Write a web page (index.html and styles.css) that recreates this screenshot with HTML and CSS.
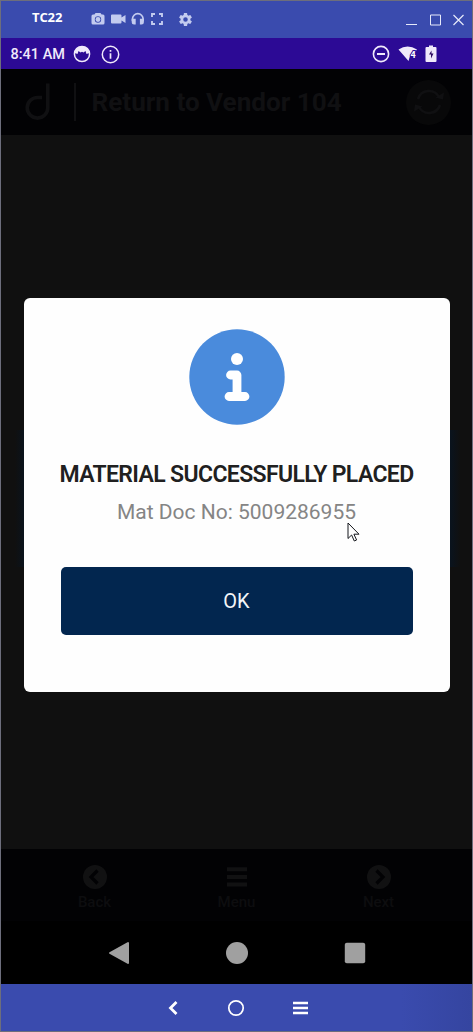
FILE: index.html
```html
<!DOCTYPE html>
<html lang="en">
<head>
<meta charset="utf-8">
<title>TC22</title>
<link rel="stylesheet" href="styles.css">
</head>
<body>
<div class="window">
  <header class="titlebar">
    <span class="device">TC22</span>
    <div class="tools">
      <svg width="14" height="12" viewBox="0 0 14 12"><path fill="currentColor" fill-rule="evenodd" d="M4.5 0h5l1.1 1.5H12a1.5 1.5 0 0 1 1.5 1.5v7a1.5 1.5 0 0 1-1.5 1.5H2A1.5 1.5 0 0 1 .5 10V3A1.5 1.5 0 0 1 2 1.500h1.400zM7 3.300a3.200 3.200 0 1 0 0 6.400a3.200 3.200 0 0 0 0-6.400z"/><circle cx="7" cy="6.500" r="2.400" fill="currentColor"/></svg>
      <svg width="15" height="12" viewBox="0 0 15 12"><path fill="currentColor" d="M1 1.500h8.500a1 1 0 0 1 1 1v2L14.500 2v8l-4-2.500v2a1 1 0 0 1-1 1H1a1 1 0 0 1-1-1v-7a1 1 0 0 1 1-1z"/></svg>
      <svg width="14" height="12" viewBox="0 0 14 12"><path d="M1.500 8V6a5.300 5.300 0 0 1 10.600 0v2" fill="none" stroke="currentColor" stroke-width="1.700"/><path fill="currentColor" d="M.7 5.800h4v5.700H3A2.300 2.300 0 0 1 .7 9.200zM8.900 5.800h4v3.400a2.300 2.300 0 0 1-2.300 2.300H8.900z"/></svg>
      <svg width="12" height="12" viewBox="0 0 12 12"><path d="M1 4V1h3M8 1h3v3M11 8v3H8M4 11H1V8" fill="none" stroke="currentColor" stroke-width="1.900"/></svg>
      <svg class="gear" width="13" height="13" viewBox="2 2 20 20"><path fill="currentColor" d="M19.430 12.980c.04-.32.07-.64.07-.98s-.03-.66-.07-.98l2.110-1.650c.19-.15.24-.42.120-.64l-2-3.460c-.12-.22-.39-.3-.61-.22l-2.490 1c-.52-.4-1.080-.73-1.690-.98l-.38-2.650A.488.488 0 0 0 14 2h-4c-.25 0-.46.18-.49.42l-.38 2.650c-.61.25-1.170.59-1.690.98l-2.490-1c-.23-.09-.49 0-.61.22l-2 3.460c-.13.22-.07.49.12.64l2.110 1.650c-.04.32-.07.65-.07.98s.03.66.07.98l-2.110 1.650c-.19.15-.24.42-.12.64l2 3.460c.12.22.39.3.61.22l2.490-1c.52.4 1.080.73 1.690.98l.38 2.650c.03.24.24.42.49.42h4c.25 0 .46-.18.49-.42l.38-2.650c.61-.25 1.170-.59 1.690-.98l2.490 1c.23.09.49 0 .61-.22l2-3.460c.12-.22.07-.49-.12-.64zM12 15.500a3.500 3.500 0 1 1 0-7a3.500 3.500 0 0 1 0 7z"/></svg>
    </div>
    <div class="controls">
      <svg width="11" height="12" viewBox="0 0 11 12"><path d="M0 10.500h11" stroke="currentColor"/></svg>
      <svg width="11" height="12" viewBox="0 0 11 12"><path d="M.5 1h10v10H.5z" fill="none" stroke="currentColor"/></svg>
      <svg width="11" height="12" viewBox="0 0 11 12"><path d="M.5 1l10 10M10.500 1l-10 10" stroke="currentColor" stroke-width="1.200"/></svg>
    </div>
  </header>

  <div class="statusbar">
    <span class="clock">8:41 AM</span>
    <svg class="face" width="18" height="18" viewBox="0 0 18 18"><circle cx="9" cy="9" r="7.600" fill="none" stroke="currentColor" stroke-width="1.500"/><path fill="currentColor" d="M1.800 8C2.500 3.500 5.500 1.500 9 1.500s6.500 2 7.200 6.500l-2.700 1-1-3-2 1.500L9 6.700 7.500 7.500 5.500 6l-1 3z"/></svg>
    <svg class="info" width="19" height="19" viewBox="0 0 19 19"><circle cx="9.500" cy="9.500" r="8.200" fill="none" stroke="currentColor" stroke-width="1.500"/><path d="M9.500 5v1.800M9.500 8.200v5.600" stroke="currentColor" stroke-width="1.700"/></svg>
    <div class="status-right">
      <svg width="18" height="18" viewBox="0 0 18 18"><circle cx="9" cy="9" r="7.600" fill="none" stroke="currentColor" stroke-width="1.600"/><path d="M5 9h8" stroke="currentColor" stroke-width="2"/></svg>
      <svg class="wifi" width="20" height="18" viewBox="0 0 20 18"><path fill="currentColor" d="M.5 4.500Q9.500-1.500 19 4.500L17 7h-3l-2.500 5.500L10.500 16z"/><text x="12.500" y="13.300" class="wifi-mark">4</text></svg>
      <svg class="battery" width="12" height="18" viewBox="0 0 12 18"><path fill="currentColor" d="M4 .5h4V2h2.500q1 0 1 1v13q0 1-1 1h-9q-1 0-1-1V3q0-1 1-1H4z"/><path d="M6.500 5.500v3h2l-2.500 5v-4H4z" fill="#2d0b60"/></svg>
    </div>
  </div>

  <div class="appbar">
    <svg class="logo" width="26" height="40" viewBox="0 0 26 40"><path d="M17 15.500h-4.500a10.300 10.300 0 1 0 10.300 10.300V1.500" fill="none" stroke="currentColor" stroke-width="3.600"/></svg>
    <span class="divider"></span>
    <h1 class="app-title">Return to Vendor 104</h1>
    <span class="refresh"><svg width="30" height="30" viewBox="0 0 30 30"><path d="M4 12A11.500 11.500 0 0 1 25 10M26 18A11.500 11.500 0 0 1 5 20" fill="none" stroke="currentColor" stroke-width="2.500"/><path fill="currentColor" d="M21.500 10.500l7.500 2 1-7zM8.500 19.500l-7.500-2-1 7z"/></svg></span>
  </div>

  <main class="content">
    <section class="dialog">
      <svg class="dialog-icon" width="96" height="96" viewBox="0 0 96 96"><circle cx="48" cy="48" r="47.700" fill="#4a8bdc"/><circle cx="48" cy="30" r="6" fill="#fff"/><path d="M41.500 46H48v21M40 67.500h16" fill="none" stroke="#fff" stroke-width="8.800" stroke-linecap="round" stroke-linejoin="round"/></svg>
      <h2 class="dialog-title">MATERIAL SUCCESSFULLY PLACED</h2>
      <p class="dialog-text">Mat Doc No: 5009286955</p>
      <button class="ok">OK</button>
      <svg class="cursor" width="13" height="21" viewBox="0 0 13 21"><path d="M1 1v15.500l3.600-3.500 2.700 6 2.300-1-2.700-5.800H12z" fill="#fff" stroke="#15171c"/></svg>
    </section>
  </main>

  <nav class="app-tabs">
    <div class="tab"><svg width="24" height="24" viewBox="0 0 24 24"><circle cx="12" cy="12" r="12" fill="currentColor"/><path d="M14.500 5.500L8 12l6.500 6.500" fill="none" stroke="#020204" stroke-width="3.200"/></svg><span>Back</span></div>
    <div class="tab"><svg width="24" height="24" viewBox="0 0 24 24"><path d="M2 4.300h20M2 12h20M2 19.500h20" stroke="currentColor" stroke-width="4"/></svg><span>Menu</span></div>
    <div class="tab"><svg width="24" height="24" viewBox="0 0 24 24"><circle cx="12" cy="12" r="12" fill="currentColor"/><path d="M9.500 5.500L16 12l-6.500 6.500" fill="none" stroke="#020204" stroke-width="3.200"/></svg><span>Next</span></div>
  </nav>

  <div class="android-nav">
    <svg width="22" height="24" viewBox="0 0 22 24"><path d="M2 12L20 2v20z" fill="currentColor" stroke="currentColor" stroke-width="2" stroke-linejoin="round"/></svg>
    <svg width="22" height="24" viewBox="0 0 22 24"><circle cx="11" cy="12" r="11" fill="currentColor"/></svg>
    <svg width="22" height="24" viewBox="0 0 22 24"><rect x=".8" y="1.800" width="20.400" height="20.400" rx="2" fill="currentColor"/></svg>
  </div>

  <footer class="bottombar">
    <svg width="10" height="16" viewBox="0 0 10 16"><path d="M8.500 2L2.500 8l6 6" fill="none" stroke="currentColor" stroke-width="2.800"/></svg>
    <svg width="18" height="18" viewBox="0 0 18 18"><circle cx="9" cy="9" r="7.200" fill="none" stroke="currentColor" stroke-width="1.700"/></svg>
    <svg width="15" height="16" viewBox="0 0 15 16"><path d="M0 3h15M0 8h15M0 13h15" stroke="currentColor" stroke-width="2.700"/></svg>
  </footer>
</div>
</body>
</html>
```
FILE: styles.css
```css
* { box-sizing: border-box; }
body { margin: 0; font-family: Roboto, "Liberation Sans", sans-serif; }
svg { display: block; flex: none; overflow: visible; }

.window {
  display: flex;
  flex-direction: column;
  width: 473px;
  height: 1032px;
  border: 1px solid #6d6e7c;
  background: #101010;
}

.titlebar {
  display: flex;
  align-items: center;
  flex: 0 0 37px;
  padding: 0 8px 0 31px;
  background: #3a4bae;
  color: #fff;
}
.device { width: 59px; margin-top: -5px; font: 700 13px "Open Sans", sans-serif; letter-spacing: -.1px; }
.tools { display: flex; align-items: center; gap: 5.500px; margin-top: -1px; color: #c3cbef; }
.tools .gear { margin-left: 11px; }
.controls { display: flex; gap: 12.500px; margin-left: auto; color: #e6e9fa; }

.statusbar {
  display: flex;
  align-items: center;
  flex: 0 0 31px;
  padding: 1px 35px 0 9.500px;
  background: #2c0a95;
  color: #f0e9fb;
}
.clock { width: 62px; font-size: 14.500px; font-weight: 500; white-space: nowrap; }
.info { margin-left: 10.500px; }
.status-right { display: flex; align-items: center; margin-left: auto; }
.wifi { margin-left: 8.500px; }
.wifi-mark { font: 700 9px Roboto, sans-serif; fill: #fff; stroke: #2c0a95; stroke-width: 2px; paint-order: stroke; }
.battery { margin-left: 7px; }

.appbar {
  display: flex;
  align-items: center;
  flex: 0 0 66px;
  padding: 0 21px 0 24px;
  background: #020204;
  color: #101012;
}
.divider { width: 2px; height: 38px; margin: 0 15.500px 0 23px; background: #101012; }
.app-title { margin: 0; font-size: 26.100px; font-weight: 700; white-space: nowrap; }
.refresh {
  display: grid;
  place-items: center;
  width: 45px;
  height: 45px;
  margin-left: auto;
  border-radius: 50%;
  background: #080809;
}

.content {
  flex: 1;
  padding: 163px 22.500px 0;
  background:
    linear-gradient(90deg, transparent 3%, #0a131d 5%, #0a131d 95.500%, transparent 97.500%) 0 295px / 100% 137px no-repeat,
    #101010;
}
.dialog {
  position: relative;
  display: flex;
  flex-direction: column;
  align-items: center;
  height: 394px;
  padding: 31px 36px 0;
  border-radius: 6px;
  background: #fefefe;
}
.dialog-title { margin: 36px 0 0; font-size: 23px; line-height: 28px; font-weight: 600; letter-spacing: -.63px; color: #202020; white-space: nowrap; }
.dialog-text { margin: 10px 0 0; font-size: 21px; line-height: 26px; color: #858585; white-space: nowrap; }
.ok {
  width: 352px;
  height: 68px;
  margin-top: 42.400px;
  padding: 0;
  border: 0;
  border-radius: 5px;
  background: #02264f;
  color: #f2f5f8;
  font: 400 20px Roboto, sans-serif;
}
.cursor { position: absolute; left: 323px; top: 223.500px; }

.app-tabs {
  display: flex;
  justify-content: center;
  flex: 0 0 72px;
  padding-top: 16px;
  background: #020204;
  color: #111112;
}
.tab { display: flex; flex-direction: column; align-items: center; gap: 4px; width: 142px; font-size: 15px; line-height: 18px; font-weight: 500; color: #111112; }
.tab span { color: #0d0d0f; }

.android-nav {
  display: flex;
  align-items: center;
  justify-content: center;
  gap: 96px;
  flex: 0 0 63px;
  background: #000;
  color: #a0a0a0;
}
.bottombar {
  display: flex;
  align-items: center;
  justify-content: center;
  gap: 49px;
  flex: 0 0 47px;
  padding-left: 3px;
  background: linear-gradient(90deg, #3a4bae 85%, #3545a0);
  color: #fff;
}
.bottombar svg:last-child { margin-left: -1px; }
```
